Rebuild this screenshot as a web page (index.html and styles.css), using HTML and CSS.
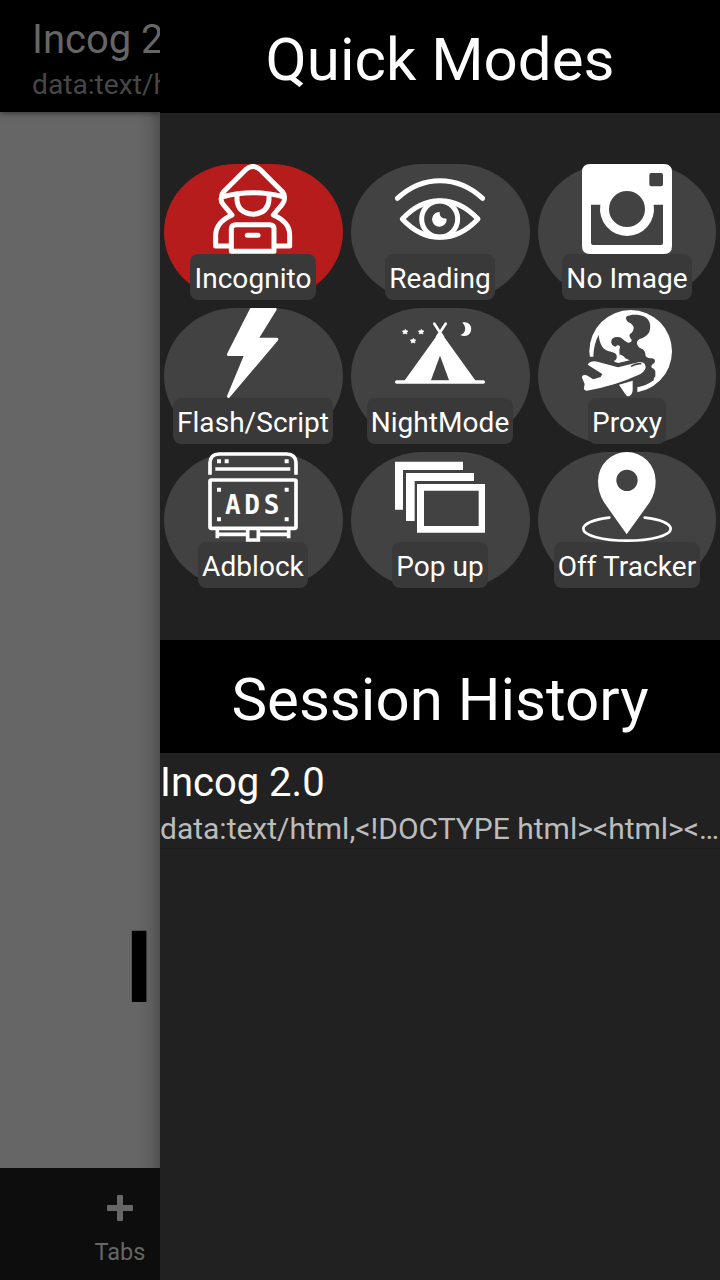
FILE: index.html
```html
<!DOCTYPE html>
<html lang="en">
<head>
<meta charset="utf-8">
<title>Incog 2.0</title>
<link rel="stylesheet" href="styles.css">
</head>
<body>
<div class="screen">
  <div class="browser">
    <header class="bar">
      <div class="bar-title">Incog 2.0</div>
      <div class="bar-url">data:text/html</div>
    </header>
    <main class="page"><h1 class="page-title">IN</h1></main>
    <nav class="bottom">
      <div class="tab">
        <svg class="plus" viewBox="0 0 26 26"><path d="M11 0h4q1 0 1 1v9h9q1 0 1 1v4q0 1-1 1h-9v9q0 1-1 1h-4q-1 0-1-1v-9H1q-1 0-1-1v-4q0-1 1-1h9V1q0-1 1-1z"/></svg>
        <span>Tabs</span>
      </div>
    </nav>
  </div>
  <aside class="drawer">
    <h2 class="heading">Quick Modes</h2>
    <div class="modes">
      <div class="mode mode-on">
        <svg class="icon" viewBox="145 24 270 270"><g class="line w15">
          <path d="M186 119 Q187 113 191 108 L258 41 Q280 22 302 41 L369 108 Q373 113 374 119 Q377 134 367 146 L341 177 Q390 198 390 236 V270 H351 M210 270 H168 V236 Q170 198 217 177 L191 146 Q181 134 186 123 Q280 98 374 123"/>
          <path d="M232 118 V132 Q235 171 280 175 Q325 171 328 132 V118"/>
          <path d="M215 286 V218 Q216 206 229 206 H330 Q343 206 343 218 V286 Z"/>
          <path d="M263 238 H295"/></g></svg>
        <span class="label">Incognito</span>
      </div>
      <div class="mode">
        <svg class="icon" viewBox="147 24 270 270"><g class="line w15">
          <path d="M154 127 Q211 74 282 74 Q353 74 410 127"/>
          <path d="M169 189 Q221 133 282 134 Q343 133 396 189 Q343 245 282 244 Q221 245 169 189Z"/>
          <ellipse cx="281" cy="189" rx="54" ry="54"/></g>
          <path d="M281 168 Q279 188 302 188 A22 22 0 1 1 281 168Z"/></svg>
        <span class="label">Reading</span>
      </div>
      <div class="mode">
        <svg class="icon" viewBox="150 24 270 270"><path fill-rule="evenodd" d="M174 24H396Q420 24 420 48V270Q420 294 396 294H174Q150 294 150 270V48Q150 24 174 24ZM358 51Q352 51 352 57V85Q352 91 358 91H387Q393 91 393 85V57Q393 51 387 51ZM177 146V261Q177 267 183 267H387Q393 267 393 261V146H365A81 81 0 1 1 205 146ZM339 159A54 54 0 1 0 231 159A54 54 0 1 0 339 159Z"/></svg>
        <span class="label">No Image</span>
      </div>
      <div class="mode">
        <svg class="icon" viewBox="145 18 270 270"><path d="M272 18H348Q353 19 350 25L299 107H352Q359 109 354 116L211 285Q207 290 203 286Q201 284 203 280L252 162H206Q200 161 203 154Z"/></svg>
        <span class="label">Flash/Script</span>
      </div>
      <div class="mode">
        <svg class="icon" viewBox="147 18 270 270"><g class="line"><path stroke-width="8" d="M265 65L291 105M299 65L273 105"/><path stroke-width="10" d="M152 240H412"/></g>
          <path fill-rule="evenodd" d="M282 88L391 239H173ZM282 161L310 237H254Z"/>
          <path d="M349 62C368 57 379 73 375 87C371 101 356 106 343 99C358 95 364 76 349 62Z"/>
          <path id="star" class="star" d="M178 82L181 86L186 87L182 91L183 96L177 94L172 96L172 91L169 87L175 86Z"/>
          <use href="#star" x="48"/><use href="#star" x="24" y="27"/></svg>
        <span class="label">NightMode</span>
      </div>
      <div class="mode">
        <svg class="icon" viewBox="150 18 270 270">
          <circle cx="296" cy="148" r="124"/>
          <path class="cut" d="M200 99C202 117 207 133 218 142C230 151 250 150 253 158Q258 170 247 176Q241 177 226 180L184 164Q185 126 200 99ZM284 43C302 34 340 38 349 54Q358 69 353 86C349 100 335 107 323 111Q312 117 316 128Q319 137 333 142Q340 148 341 162Q345 169 361 169Q373 173 367 183Q355 190 359 197Q372 202 370 213V223Q363 230 365 235C347 247 334 253 316 256V280H150V164H190L247 178L266 171Q262 162 262 143Q267 133 260 130Q253 130 251 134Q241 133 238 123Q236 109 249 106Q265 103 272 111Q281 120 288 122Q300 122 299 113Q289 103 294 96Q306 89 305 76Q301 65 289 61Q278 51 284 43Z"/>
          <path d="M246 179Q260 175 263 157L275 163Q278 170 293 175L259 183ZM167 188Q169 182 177 179Q187 176 196 179L258 196L322 180Q341 178 341 198Q336 213 317 220Q249 252 165 266Q154 265 156 257L158 246L149 225Q153 217 164 220L184 232L206 225L211 216ZM261 248L302 236V266Q299 284 286 283Q282 280 275 269Z"/>
          <path class="cutline" d="M297 193Q313 183 328 185"/></svg>
        <span class="label">Proxy</span>
      </div>
      <div class="mode">
        <svg class="icon" viewBox="144 18 270 270"><g class="box">
          <path d="M150 86V50Q151 25 177 24H380Q407 25 408 50V86M166 69H391"/>
          <rect x="150" y="102" width="258" height="145" rx="4"/><path d="M167 265H258M300 265H391M172 248V277M386 248V277"/><path d="M263 248V282H295V248"/></g>
          <path d="M171 40h12v12h-12zM194 40h12v12h-12zM374 40h12v12h-12zM171 125h12v12h-12zM374 125h12v12h-12zM171 214h12v12h-12zM374 214h12v12h-12z"/>
          <text class="ads" x="195 253 311" y="203">ADS</text></svg>
        <span class="label">Adblock</span>
      </div>
      <div class="mode">
        <svg class="icon" viewBox="147 18 270 270"><path fill-rule="evenodd" d="M147 47H351V72H171V191H147ZM180 81H384V105H206V225H180ZM213 114H417V260H213ZM234 134V240H398V134Z"/></svg>
        <span class="label">Pop up</span>
      </div>
      <div class="mode">
        <svg class="icon" viewBox="150 18 270 270"><path fill-rule="evenodd" d="M284 265L216 169Q198 141 198 105A86.5 87 0 0 1 371 105Q371 141 353 169ZM317 103A32 32 0 1 0 253 103A32 32 0 1 0 317 103Z"/><path class="line" stroke-width="8" d="M232 215C184 220 154 234 154 249C154 268 212 284 285 284S416 268 416 249C416 234 387 220 338 215"/></svg>
        <span class="label">Off Tracker</span>
      </div>
    </div>
    <h2 class="heading">Session History</h2>
    <div class="entry">
      <div class="entry-title">Incog 2.0</div>
      <div class="entry-url">data:text/html,&lt;!DOCTYPE html&gt;&lt;html&gt;&lt;head&gt;&lt;title&gt;Incog 2.0&lt;/title&gt;</div>
    </div>
  </aside>
</div>
</body>
</html>
```
FILE: styles.css
```css
* { box-sizing: border-box; }
body { margin: 0; background: #000; font-family: Roboto, sans-serif; }
.screen { display: flex; width: 720px; height: 1280px; overflow: hidden; }
.browser { width: 160px; display: flex; flex-direction: column; overflow: hidden; white-space: nowrap; }
.bar { height: 112px; padding: 16px 0 0 32px; background: #000; box-shadow: 0 1px 6px rgba(0,0,0,.5); z-index: 1; }
.bar-title { font-size: 40px; line-height: 47px; color: #666; }
.bar-url { font-size: 28.2px; line-height: 33px; margin-top: 5px; color: #474747; }
.page { flex: 1; padding: 797px 0 0 124.5px; background: linear-gradient(90deg, #666 138px, #5f5f5f 150px, #505050 160px); }
.page-title { margin: 0; font-size: 100px; line-height: 117px; font-weight: 700; color: #000; }
.bottom { height: 112px; padding-left: 80px; background: #0d0d0d; color: #666; }
.tab { width: 80px; padding-top: 27px; display: flex; flex-direction: column; align-items: center; font-size: 23.5px; line-height: 28px; }
.plus { width: 26px; height: 26px; margin-bottom: 17px; fill: #666; }
.drawer { width: 560px; background: #212121; color: #fff; z-index: 2; }
.heading { margin: 0; height: 113px; padding-top: 5px; background: #000; text-align: center; font-size: 60px; line-height: 109px; font-weight: 400; }
.modes { height: 527px; padding: 51px 4px 0; display: grid; grid-template-columns: 179px 179px 178px; grid-auto-rows: 136px; gap: 8px; }
.mode { display: flex; flex-direction: column; align-items: center; border-radius: 72px / 68px; background: #424242; }
.mode:not(:nth-child(3n)) { padding-right: 1px; }
.mode-on { background: #b71c1c; }
.icon { width: 90px; height: 90px; flex: none; fill: #fff; overflow: hidden; }
.line { fill: none; stroke: #fff; stroke-linecap: round; stroke-linejoin: round; }
.w15 { stroke-width: 15px; }
.star { stroke: #fff; stroke-width: 2px; }
.box { fill: none; stroke: #fff; stroke-width: 11px; }
.cut { fill: #424242; }
.cutline { fill: none; stroke: #424242; stroke-width: 5px; }
.ads { font: 700 78px "DejaVu Sans Mono", monospace; }
.label { height: 46px; padding: 0 4px; border-radius: 8px; background: #393939; font-size: 28px; line-height: 49px; letter-spacing: .05px; white-space: nowrap; }
.entry { height: 96px; padding-top: 6px; border-bottom: 1px solid #1d1d1d; }
.entry-title { font-size: 40px; line-height: 47px; }
.entry-url { margin-top: 5px; font-size: 30px; line-height: 35px; color: #bcbcbc; white-space: nowrap; overflow: hidden; text-overflow: ellipsis; }
```
